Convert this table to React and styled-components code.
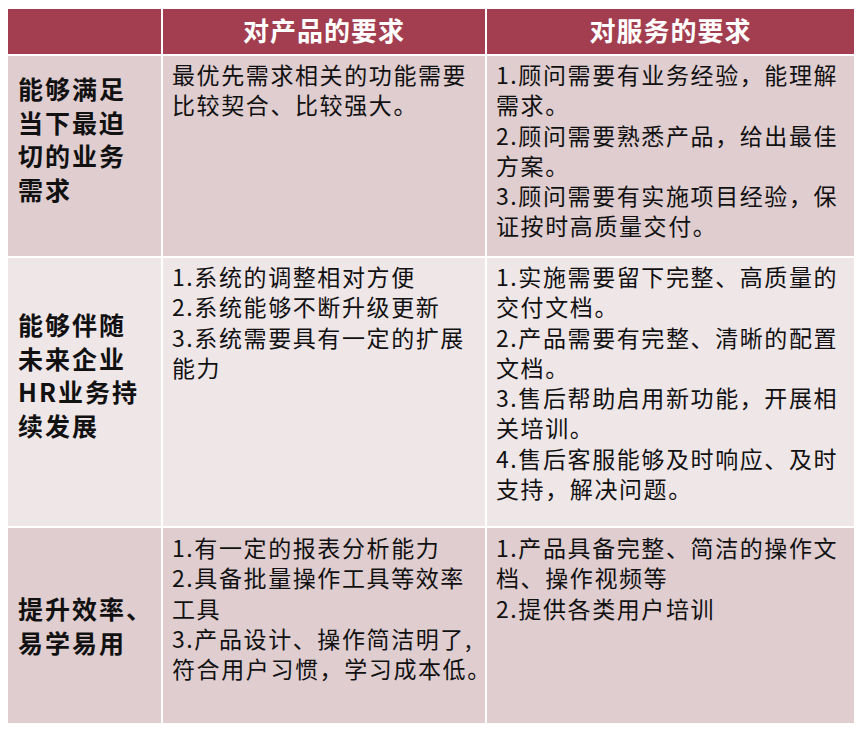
import React from "react";
import styled, { createGlobalStyle } from "styled-components";

const GlobalStyle = createGlobalStyle`
  html, body {
    margin: 0;
    padding: 0;
    background: #ffffff;
  }
  body {
    font-family: "Noto Sans CJK SC", "Noto Sans", sans-serif;
  }
`;

const Page = styled.div`
  padding: 9px 8px;
`;

const Table = styled.div`
  display: grid;
  grid-template-columns: 153px 322px 367px;
  grid-template-rows: 45px 200px 268px 195px;
  gap: 2px;
  width: 846px;
  background: #ffffff;
`;

const HeadCell = styled.div`
  background: #a33e50;
  color: #ffffff;
  font-size: 26px;
  font-weight: 700;
  letter-spacing: 1px;
  display: flex;
  align-items: center;
  justify-content: center;
  padding-bottom: 3px;
  line-height: 1;
`;

const tones = {
  dark: "#dfcdd0",
  light: "#efe6e8",
};

const LabelCell = styled.div`
  background: ${(p) => tones[p.$tone]};
  display: flex;
  flex-direction: column;
  justify-content: center;
  padding: 0 0 ${(p) => (p.$trailing ? "34px" : "0")} 10px;
  font-size: 25px;
  font-weight: 700;
  letter-spacing: 2px;
  line-height: 33.5px;
  color: #111111;
`;

const TextCell = styled.div`
  background: ${(p) => tones[p.$tone]};
  padding: ${(p) => p.$top}px 4px 0 9px;
  font-size: 23px;
  letter-spacing: 1.6px;
  line-height: 30.3px;
  color: #111111;
`;

const Line = styled.div`
  white-space: nowrap;
`;

const rows = [
  {
    tone: "dark",
    trailing: true,
    top: 3,
    label: ["能够满足", "当下最迫", "切的业务", "需求"],
    product: ["最优先需求相关的功能需要", "比较契合、比较强大。"],
    service: [
      "1.顾问需要有业务经验，能理解",
      "需求。",
      "2.顾问需要熟悉产品，给出最佳",
      "方案。",
      "3.顾问需要有实施项目经验，保",
      "证按时高质量交付。",
    ],
  },
  {
    tone: "light",
    trailing: true,
    top: 3,
    label: ["能够伴随", "未来企业", "HR业务持", "续发展"],
    product: [
      "1.系统的调整相对方便",
      "2.系统能够不断升级更新",
      "3.系统需要具有一定的扩展",
      "能力",
    ],
    service: [
      "1.实施需要留下完整、高质量的",
      "交付文档。",
      "2.产品需要有完整、清晰的配置",
      "文档。",
      "3.售后帮助启用新功能，开展相",
      "关培训。",
      "4.售后客服能够及时响应、及时",
      "支持，解决问题。",
    ],
  },
  {
    tone: "dark",
    trailing: false,
    top: 4,
    label: ["提升效率、", "易学易用"],
    product: [
      "1.有一定的报表分析能力",
      "2.具备批量操作工具等效率",
      "工具",
      "3.产品设计、操作简洁明了,",
      "符合用户习惯，学习成本低。",
    ],
    service: ["1.产品具备完整、简洁的操作文", "档、操作视频等", "2.提供各类用户培训"],
  },
];

const Lines = ({ items }) => items.map((t, i) => <Line key={i}>{t}</Line>);

const App = () => {
  return (
    <Page>
      <GlobalStyle />
      <Table>
        <HeadCell />
        <HeadCell>对产品的要求</HeadCell>
        <HeadCell>对服务的要求</HeadCell>
        {rows.map((r, i) => (
          <React.Fragment key={i}>
            <LabelCell $tone={r.tone} $trailing={r.trailing}>
              <Lines items={r.label} />
            </LabelCell>
            <TextCell $tone={r.tone} $top={r.top}>
              <Lines items={r.product} />
            </TextCell>
            <TextCell $tone={r.tone} $top={r.top}>
              <Lines items={r.service} />
            </TextCell>
          </React.Fragment>
        ))}
      </Table>
    </Page>
  );
};

export default App;
